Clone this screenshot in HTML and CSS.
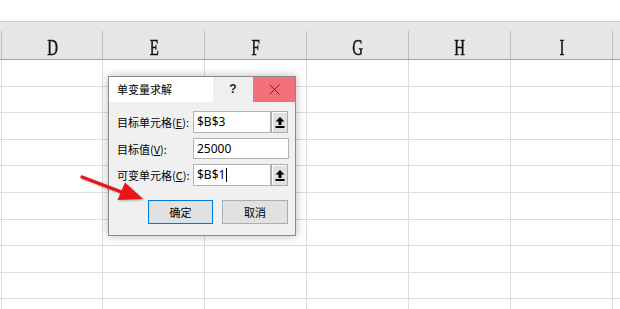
FILE: index.html
```html
<!DOCTYPE html>
<html>
<head>
<meta charset="utf-8">
<link rel="stylesheet" href="styles.css">
</head>
<body>
<div class="sheet">
  <div class="topbar"></div>
  <div class="colhead">
    <div class="edge"></div>
    <div class="hc first"><span>D</span></div>
    <div class="hc"><span>E</span></div>
    <div class="hc"><span>F</span></div>
    <div class="hc"><span>G</span></div>
    <div class="hc"><span>H</span></div>
    <div class="hc"><span>I</span></div>
    <div class="hc last"></div>
  </div>
  <div class="rows">
    <div class="row h26"><div class="edge"></div><div class="c first"></div><div class="c"></div><div class="c"></div><div class="c"></div><div class="c"></div><div class="c"></div><div class="c last"></div></div>
    <div class="row h25"><div class="edge"></div><div class="c first"></div><div class="c"></div><div class="c"></div><div class="c"></div><div class="c"></div><div class="c"></div><div class="c last"></div></div>
    <div class="row h26"><div class="edge"></div><div class="c first"></div><div class="c"></div><div class="c"></div><div class="c"></div><div class="c"></div><div class="c"></div><div class="c last"></div></div>
    <div class="row h25"><div class="edge"></div><div class="c first"></div><div class="c"></div><div class="c"></div><div class="c"></div><div class="c"></div><div class="c"></div><div class="c last"></div></div>
    <div class="row h26"><div class="edge"></div><div class="c first"></div><div class="c"></div><div class="c"></div><div class="c"></div><div class="c"></div><div class="c"></div><div class="c last"></div></div>
    <div class="row h26"><div class="edge"></div><div class="c first"></div><div class="c"></div><div class="c"></div><div class="c"></div><div class="c"></div><div class="c"></div><div class="c last"></div></div>
    <div class="row h25"><div class="edge"></div><div class="c first"></div><div class="c"></div><div class="c"></div><div class="c"></div><div class="c"></div><div class="c"></div><div class="c last"></div></div>
    <div class="row h26"><div class="edge"></div><div class="c first"></div><div class="c"></div><div class="c"></div><div class="c"></div><div class="c"></div><div class="c"></div><div class="c last"></div></div>
    <div class="row h25"><div class="edge"></div><div class="c first"></div><div class="c"></div><div class="c"></div><div class="c"></div><div class="c"></div><div class="c"></div><div class="c last"></div></div>
    <div class="row tail"><div class="edge"></div><div class="c first"></div><div class="c"></div><div class="c"></div><div class="c"></div><div class="c"></div><div class="c"></div><div class="c last"></div></div>
  </div>
</div>

<div class="dialog">
  <div class="titlebar">
    <div class="title">单变量求解</div>
    <div class="help">?</div>
    <div class="close">
      <svg width="11" height="11" viewBox="0 0 11 11"><path d="M0.5 0.5 L10.5 10.5 M10.5 0.5 L0.5 10.5" stroke="#3a3a3a" stroke-width="1" fill="none"/></svg>
    </div>
  </div>
  <div class="body">
    <div class="frow">
      <div class="label">目标单元格(<u>E</u>):</div>
      <div class="input short">$B$3</div>
      <div class="pick">
        <svg width="10" height="11" viewBox="0 0 10 11"><path d="M5 0 L9.5 4.5 L6.5 4.5 L6.5 8 L3.5 8 L3.5 4.5 L0.5 4.5 Z" fill="#000"/><rect x="0.5" y="9" width="9" height="2" fill="#000"/></svg>
      </div>
    </div>
    <div class="frow mid">
      <div class="label">目标值(<u>V</u>):</div>
      <div class="input long">25000</div>
    </div>
    <div class="frow">
      <div class="label">可变单元格(<u>C</u>):</div>
      <div class="input short">$B$1<span class="caret"></span></div>
      <div class="pick">
        <svg width="10" height="11" viewBox="0 0 10 11"><path d="M5 0 L9.5 4.5 L6.5 4.5 L6.5 8 L3.5 8 L3.5 4.5 L0.5 4.5 Z" fill="#000"/><rect x="0.5" y="9" width="9" height="2" fill="#000"/></svg>
      </div>
    </div>
    <div class="btns">
      <div class="btn ok">确定</div>
      <div class="btn">取消</div>
    </div>
  </div>
</div>

<svg class="arrow" width="70" height="40" viewBox="0 0 70 40">
  <line x1="2" y1="7" x2="44" y2="23" stroke="#e8161a" stroke-width="3.2" stroke-linecap="round"/>
  <path d="M63 29 L37.5 30 L45 12.5 Z" fill="#e8161a"/>
</svg>
</body>
</html>
```

FILE: styles.css
```css
* { box-sizing: border-box; }
html, body { margin: 0; padding: 0; }
body {
  width: 620px;
  height: 309px;
  overflow: hidden;
  background: #fff;
  position: relative;
  font-family: "Noto Sans CJK SC", "Noto Sans", sans-serif;
}
.sheet { width: 620px; height: 309px; overflow: hidden; }
.topbar { height: 21px; background: #fff; }
.colhead {
  display: flex;
  height: 39px;
  background: #e6e6e6;
  border-top: 1px solid #cdcdcd;
  border-bottom: 1px solid #a2a2a2;
}
.colhead .edge {
  width: 2px;
  flex: none;
  background: linear-gradient(#bdbdbd, #bdbdbd) no-repeat right bottom / 1px 28px;
}
.hc {
  flex: none;
  width: 102px;
  text-align: center;
  padding-top: 13px;
  line-height: 24px;
  background: linear-gradient(#bdbdbd, #bdbdbd) no-repeat right bottom / 1px 28px;
}
.hc.first { width: 101px; }
.hc.last { flex: 1; background: none; }
.hc span {
  display: inline-block;
  font-family: "Liberation Serif", serif;
  font-size: 24px;
  color: #111;
  -webkit-text-stroke: 0.5px #111;
  transform: scaleX(0.62);
}
.rows { display: flex; flex-direction: column; }
.row {
  display: flex;
  flex: none;
  border-bottom: 1px solid #dcdcdc;
}
.row.h26 { height: 27px; }
.row.h25 { height: 26px; }
.row.tail { height: 10px; border-bottom: none; }
.row .edge { width: 2px; flex: none; border-right: 1px solid #dcdcdc; }
.c { flex: none; width: 102px; border-right: 1px solid #dcdcdc; }
.c.first { width: 101px; }
.c.last { flex: 1; border-right: none; }

.dialog {
  position: absolute;
  left: 108px;
  top: 76px;
  width: 188px;
  height: 160px;
  border: 1px solid #8a8a8a;
  background: #f0f0f0;
  box-shadow: 0 0 9px rgba(0, 0, 0, 0.28);
  display: flex;
  flex-direction: column;
}
.titlebar {
  display: flex;
  height: 25px;
  background: #fff;
  flex: none;
}
.title {
  flex: 1;
  padding-left: 8px;
  font-size: 11px;
  line-height: 25px;
  color: #000;
}
.help {
  width: 40px;
  background: #efefef;
  text-align: center;
  font-family: "Liberation Sans", sans-serif;
  font-size: 12px;
  font-weight: bold;
  line-height: 25px;
  color: #222;
}
.close {
  width: 42px;
  background: #f1707a;
  display: flex;
  align-items: center;
  justify-content: center;
}
.body {
  padding: 9px 5px 0 8px;
  display: flex;
  flex-direction: column;
}
.frow {
  display: flex;
  height: 22px;
  align-items: stretch;
}
.frow.mid { height: 21px; margin: 5px 0; }
.label {
  width: 76px;
  font-size: 11px;
  line-height: 22px;
  color: #000;
  white-space: nowrap;
}
.label u { text-underline-offset: 1px; }
.input {
  background: #fff;
  border: 1px solid #b4b4b4;
  font-family: "Noto Sans", "Liberation Sans", sans-serif;
  font-size: 12px;
  line-height: 20px;
  padding-left: 3px;
  color: #000;
  display: flex;
  align-items: center;
}
.input.short { width: 78px; }
.input.long { width: 96px; line-height: 19px; }
.caret {
  display: inline-block;
  width: 1px;
  height: 14px;
  background: #000;
  margin-left: 1px;
}
.pick {
  width: 17px;
  background: #e1e1e1;
  border: 1px solid #adadad;
  box-shadow: inset 1px 1px 0 #fff;
  display: flex;
  align-items: center;
  justify-content: center;
}
.btns {
  display: flex;
  margin-top: 14px;
  padding-left: 31px;
  gap: 9px;
}
.btn {
  width: 66px;
  height: 24px;
  background: #e1e1e1;
  border: 1px solid #adadad;
  font-size: 11px;
  line-height: 22px;
  text-align: center;
  color: #000;
}
.btn.ok {
  width: 65px;
  border-color: #0078d7;
  box-shadow: inset 0 0 0 1px #cce4f7;
}
.arrow {
  position: absolute;
  left: 80px;
  top: 170px;
  filter: drop-shadow(1px 1px 1px rgba(0, 0, 0, 0.3));
}
```
